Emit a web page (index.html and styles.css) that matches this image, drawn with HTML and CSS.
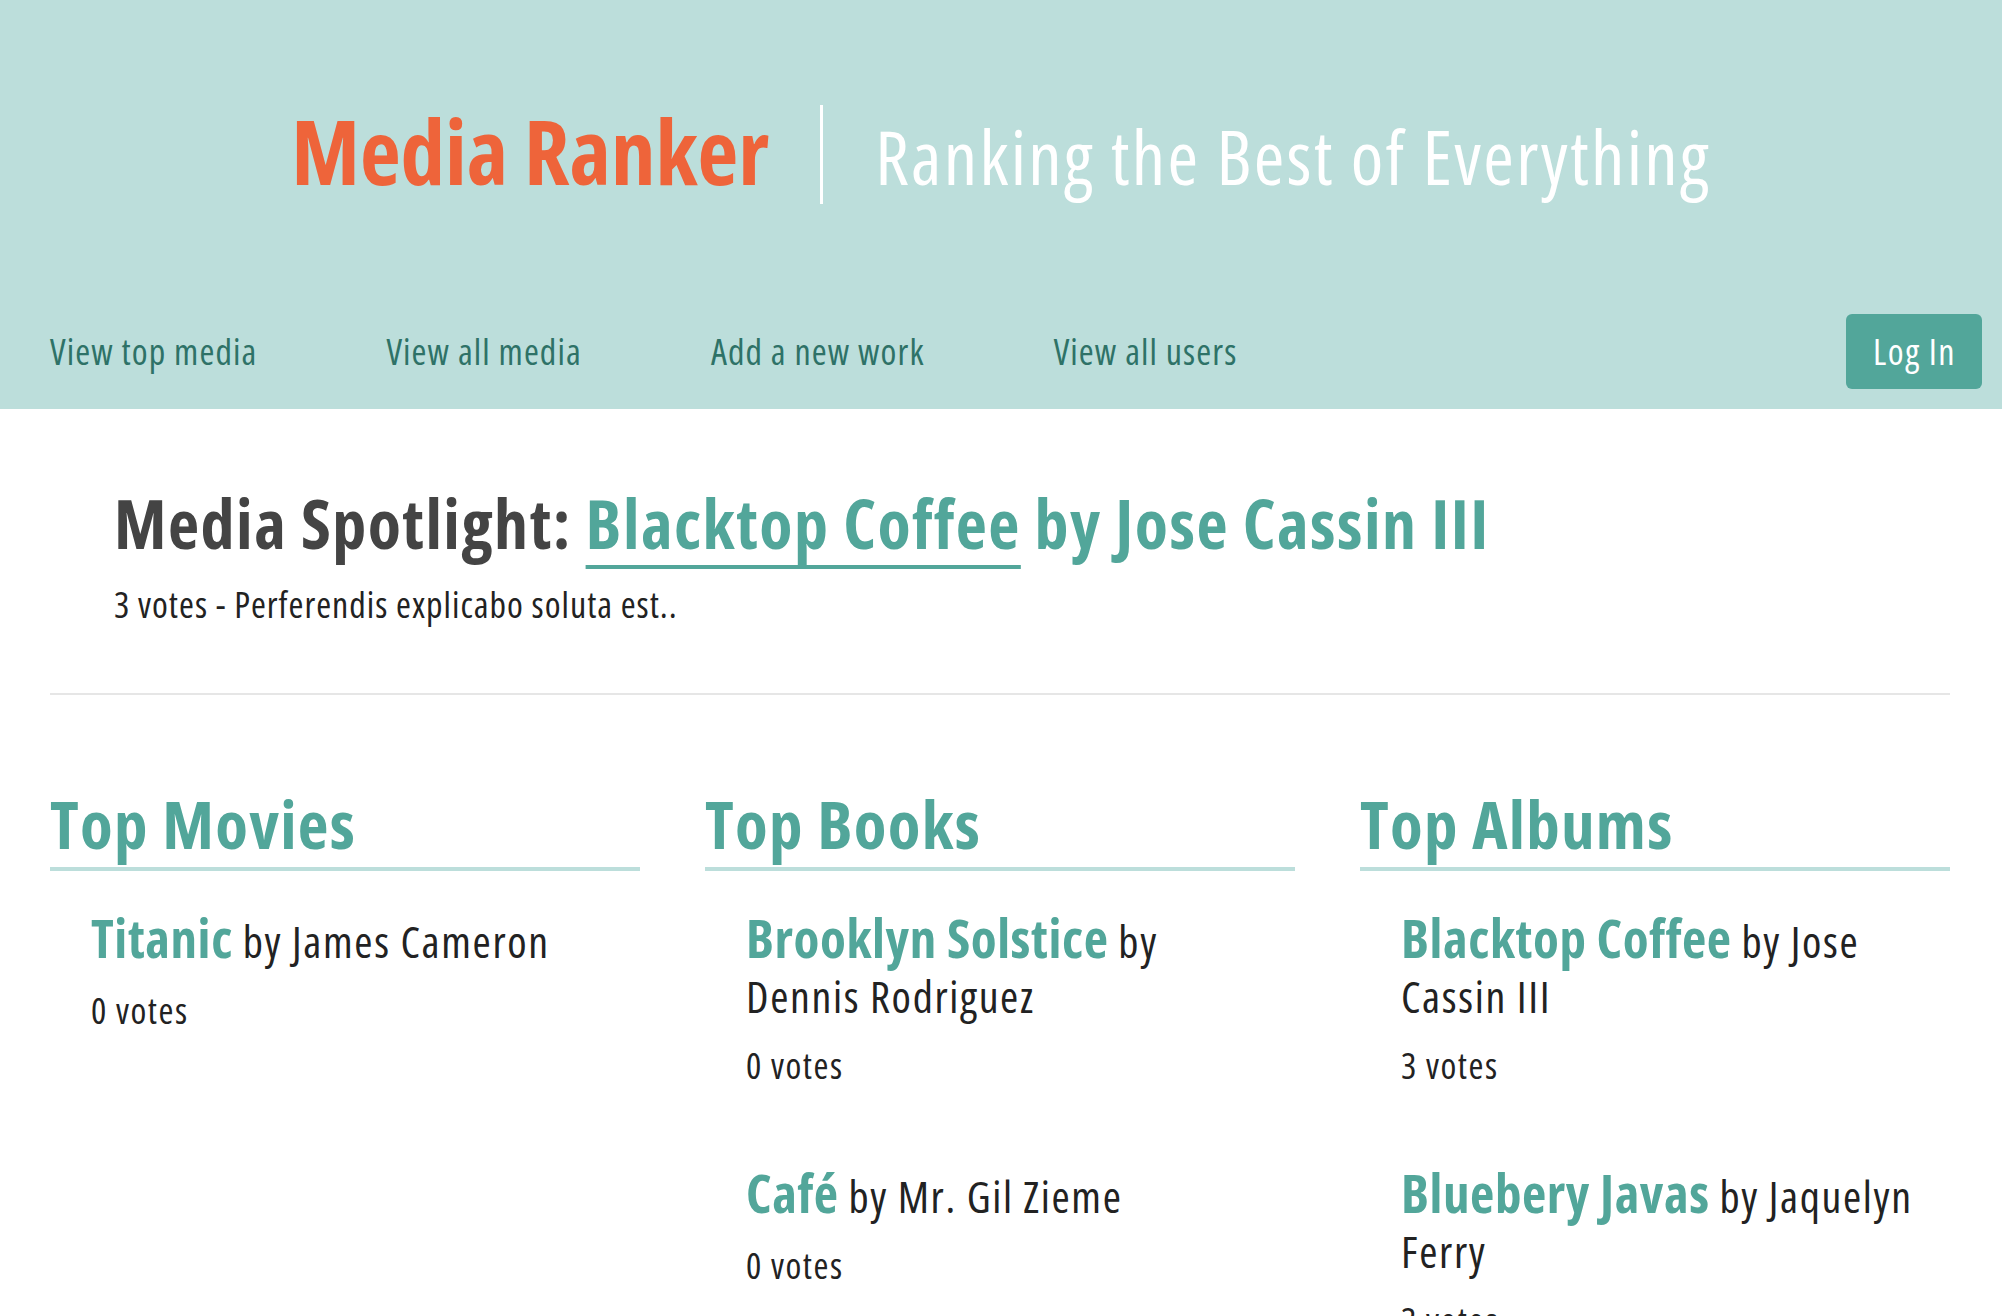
FILE: index.html
```html
<!DOCTYPE html>
<html lang="en">
<head>
<meta charset="utf-8">
<title>Media Ranker</title>
<link rel="stylesheet" href="styles.css">
</head>
<body>
<header class="site-header">
  <div class="brand">
    <h1 class="brand-title">Media Ranker</h1>
    <span class="brand-divider"></span>
    <p class="brand-tagline">Ranking the Best of Everything</p>
  </div>
  <nav class="nav">
    <a class="nav-link" href="#">View top media</a>
    <a class="nav-link" href="#">View all media</a>
    <a class="nav-link" href="#">Add a new work</a>
    <a class="nav-link" href="#">View all users</a>
    <a class="login-btn" href="#">Log In</a>
  </nav>
</header>
<main class="main">
  <section class="spotlight">
    <h2 class="spotlight-title">Media Spotlight: <span class="teal"><a class="spotlight-link" href="#">Blacktop Coffee</a> by Jose Cassin III</span></h2>
    <p class="spotlight-meta">3 votes - Perferendis explicabo soluta est..</p>
  </section>
  <hr class="divider">
  <section class="top-lists">
    <div class="top-col">
      <h2 class="col-title">Top Movies</h2>
      <ul class="work-list">
        <li class="work">
          <h3 class="work-heading"><a class="work-title" href="#">Titanic</a> by James Cameron</h3>
          <p class="work-votes">0 votes</p>
        </li>
      </ul>
    </div>
    <div class="top-col">
      <h2 class="col-title">Top Books</h2>
      <ul class="work-list">
        <li class="work">
          <h3 class="work-heading"><a class="work-title" href="#">Brooklyn Solstice</a> by Dennis Rodriguez</h3>
          <p class="work-votes">0 votes</p>
        </li>
        <li class="work">
          <h3 class="work-heading"><a class="work-title" href="#">Café</a> by Mr. Gil Zieme</h3>
          <p class="work-votes">0 votes</p>
        </li>
      </ul>
    </div>
    <div class="top-col">
      <h2 class="col-title">Top Albums</h2>
      <ul class="work-list">
        <li class="work">
          <h3 class="work-heading"><a class="work-title" href="#">Blacktop Coffee</a> by Jose Cassin III</h3>
          <p class="work-votes">3 votes</p>
        </li>
        <li class="work">
          <h3 class="work-heading"><a class="work-title" href="#">Bluebery Javas</a> by Jaquelyn Ferry</h3>
          <p class="work-votes">3 votes</p>
        </li>
      </ul>
    </div>
  </section>
</main>
</body>
</html>
```
FILE: styles.css
```css
* { box-sizing: border-box; }

body {
  margin: 0;
  font-family: "Open Sans", "Noto Sans", "DejaVu Sans Condensed", sans-serif;
  font-stretch: 75%;
  letter-spacing: 0;
  color: #222;
  background: #fff;
}

a { text-decoration: none; }

.site-header {
  background: #bcdedb;
  padding: 105px 0 20px;
}

.brand {
  display: flex;
  align-items: baseline;
  justify-content: center;
  height: 104px;
}

.brand-title {
  margin: 0;
  font-size: 89px;
  line-height: 91px;
  font-weight: 700;
  color: #ee643a;
}

.brand-divider {
  align-self: flex-start;
  width: 3px;
  height: 99px;
  background: #fff;
  margin: 0 52px 0 51px;
}

.brand-tagline {
  margin: 0;
  font-size: 74px;
  line-height: 99px;
  font-weight: 400;
  letter-spacing: 2.3px;
  color: #fff;
}

.nav {
  display: flex;
  align-items: baseline;
  gap: 129px;
  margin-top: 105px;
  padding: 0 20px 0 50px;
}

.nav-link {
  font-size: 36px;
  letter-spacing: 1.1px;
  color: #2e7267;
}

.login-btn {
  margin-left: auto;
  display: block;
  height: 75px;
  padding: 16px 26px 0 27px;
  font-size: 36px;
  line-height: 44px;
  letter-spacing: 1.5px;
  color: #fff;
  background: #52a69a;
  border-radius: 6px;
}

.main {
  padding: 0 52px 0 50px;
}

.spotlight {
  padding: 74px 0 0 64px;
}

.spotlight-title {
  margin: 0;
  font-size: 68px;
  line-height: 80px;
  font-weight: 700;
  letter-spacing: 1.5px;
  color: #444;
}

.teal { color: #52a69a; }

.spotlight-link {
  color: #52a69a;
  text-decoration: underline;
  text-decoration-thickness: 4px;
  text-underline-offset: 16px;
  text-decoration-skip-ink: none;
}

.spotlight-meta {
  margin: 20px 0 0;
  font-size: 36px;
  line-height: 44px;
  letter-spacing: 1px;
  color: #222;
}

.divider {
  margin: 66px 0 0;
  border: 0;
  border-top: 2px solid #e6e6e6;
  height: 0;
}

.top-lists {
  display: grid;
  grid-template-columns: repeat(3, 1fr);
  gap: 65px;
  margin-top: 95px;
}

.col-title {
  margin: 0;
  font-size: 67px;
  line-height: 67px;
  font-weight: 700;
  letter-spacing: 1.3px;
  color: #52a69a;
  padding-bottom: 10px;
  border-bottom: 4px solid #bcdedb;
}

.work-list {
  list-style: none;
  margin: 39px 0 0;
  padding: 0 25px 0 41px;
}

.work + .work { margin-top: 77px; }

.work-heading {
  margin: 0;
  font-size: 44px;
  line-height: 55px;
  font-weight: 400;
  letter-spacing: 1.65px;
  color: #222;
}

.work-title {
  font-size: 53px;
  font-weight: 700;
  letter-spacing: 0.6px;
  color: #52a69a;
}

.work-votes {
  margin: 20px 0 0;
  font-size: 36px;
  line-height: 44px;
  letter-spacing: 1.5px;
  color: #222;
}
```
